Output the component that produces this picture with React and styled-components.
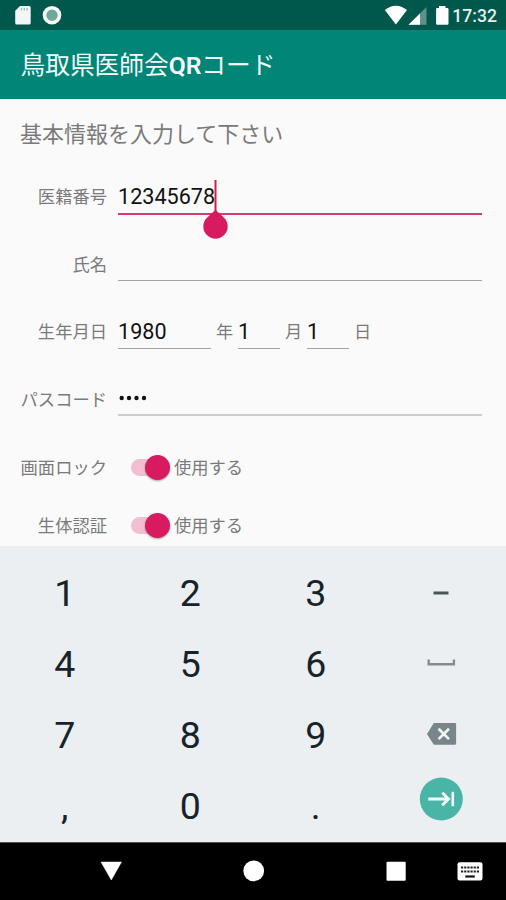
import React from "react";
import styled, { createGlobalStyle } from "styled-components";

const Global = createGlobalStyle`
  * { box-sizing: border-box; }
  html, body { margin: 0; padding: 0; }
  body { font-family: Roboto, "Noto Sans CJK JP", sans-serif; background: #fafafa; }
`;

const Screen = styled.div`
  width: 506px;
  height: 900px;
  display: flex;
  flex-direction: column;
  overflow: hidden;
  background: #fafafa;
`;

const StatusBar = styled.header`
  height: 30px;
  flex: none;
  display: flex;
  justify-content: space-between;
  background: #00574b;
  svg { display: block; }
`;

const StatusRight = styled.div`
  display: flex;
  padding-right: 9px;
`;

const Clock = styled.time`
  width: 45px;
  color: #e6f0ee;
  font-size: 17.6px;
  font-weight: 500;
  line-height: 32px;
  text-align: right;
  white-space: nowrap;
`;

const AppBar = styled.h1`
  height: 69px;
  flex: none;
  margin: 0;
  padding: 1px 20.5px 0;
  border-bottom: 1px solid #007a6c;
  background: #008577;
  color: #f4fbfa;
  font-size: 24.7px;
  font-weight: 400;
  line-height: 70px;
  white-space: nowrap;
`;

const Latin = styled.span`
  font-weight: 600;
`;

const Form = styled.main`
  height: 447px;
  flex: none;
  overflow: hidden;
  padding: 0 24px 0 20px;
  color: #7a7a7a;
`;

const Prompt = styled.h2`
  height: 63px;
  margin: 0;
  padding-top: 8px;
  font-size: 22px;
  font-weight: 400;
  line-height: 56px;
  white-space: nowrap;
`;

const Row = styled.div`
  display: flex;
  align-items: center;
  height: ${(p) => p.$height}px;
  margin-top: ${(p) => p.$gap || 0}px;
`;

const Label = styled.label`
  width: 87px;
  flex: none;
  margin-right: 11px;
  padding-top: ${(p) => (p.$level ? 0 : 2)}px;
  font-size: 17.3px;
  line-height: 24px;
  text-align: right;
  white-space: nowrap;
`;

const Field = styled.div`
  position: relative;
  flex: ${(p) => (p.$width ? "none" : 1)};
  width: ${(p) => (p.$width ? p.$width + "px" : "auto")};
  height: ${(p) => (p.$active ? 37 : 34)}px;
  border-bottom: ${(p) => p.$line || 1}px solid ${(p) => (p.$active ? "#d93a6d" : p.$tone || "#a3a3a3")};
  color: #111;
  font-size: 21.6px;
  line-height: ${(p) => (p.$active ? 37 : 33)}px;
`;

const Unit = styled.span`
  width: ${(p) => p.$width}px;
  padding-left: 5px;
  font-size: 17.2px;
  line-height: 24px;
`;

const Caret = styled.svg`
  position: absolute;
  left: 85px;
  top: 2px;
  display: block;
`;

const Dots = styled.svg`
  display: block;
`;

const Toggle = styled.button`
  display: flex;
  align-items: center;
  width: 56px;
  height: 40px;
  padding: 0 0 0 13px;
  border: 0;
  background: none;
`;

const Track = styled.span`
  display: flex;
  align-items: center;
  justify-content: flex-end;
  width: 39px;
  height: 17px;
  border-radius: 9px;
  background: #f1bfd1;
`;

const Thumb = styled.span`
  width: 25px;
  height: 25px;
  flex: none;
  border-radius: 50%;
  background: #d81b60;
  box-shadow: 0 1px 2px rgba(0, 0, 0, 0.35);
`;

const ToggleText = styled.span`
  padding-top: 2px;
  font-size: 17.3px;
  line-height: 24px;
`;

const Keypad = styled.section`
  height: 296px;
  flex: none;
  display: grid;
  grid-template-columns: repeat(4, 125.5px);
  grid-template-rows: repeat(4, 71.2px);
  padding: 11px 2px 0;
  background: #eceff1;
`;

const Key = styled.button`
  display: flex;
  align-items: center;
  justify-content: center;
  padding: 0;
  border: 0;
  background: none;
  color: #17232b;
  font-family: Roboto, sans-serif;
  font-size: 37.5px;
  line-height: 44px;
  svg { display: block; }
`;

const NavBar = styled.nav`
  height: 58px;
  flex: none;
  background: #000;
  border-top: 1px solid #555;
  svg { display: block; }
`;

const StorageIcons = () => (
  <svg width="70" height="30" viewBox="0 0 70 30">
    <path d="M20 6h9.200a1.500 1.500 0 0 1 1.500 1.500v15.500a1.500 1.500 0 0 1-1.500 1.500h-12.500a1.500 1.500 0 0 1-1.500-1.500v-12.200z" fill="#f2f6f5" />
    <path d="M21.500 8v2.500M24.300 8v2.500M27.100 8v2.500" stroke="#9fbab5" strokeWidth="1.300" />
    <circle cx="52" cy="15.200" r="7.500" fill="#6fa79c" stroke="#f5f8f7" strokeWidth="3.600" />
  </svg>
);

const SignalIcons = () => (
  <svg width="68" height="30" viewBox="380 0 68 30">
    <path d="M380.800 10Q391.800 1.500 403 10L391.900 24.500Z" fill="#fff" />
    <path d="M422.500 7v17.800h-18z" fill="#5e9188" />
    <path d="M416 13.500v11.300h-11.500z" fill="#fff" />
    <path d="M435 6h6.500v2h2q1 0 1 1.200v14.300q0 1.300-1.200 1.300h-10q-1.200 0-1.200-1.300v-14.300q0-1.200 1-1.200h1.900z" fill="#fff" />
  </svg>
);

const icons = {
  dash: (
    <svg width="44" height="44" viewBox="-22 -22 44 44"><path d="M-7.500 0H7.500" stroke="#4b5459" strokeWidth="3" /></svg>
  ),
  space: (
    <svg width="44" height="44" viewBox="-22.300 -22 44 44"><path d="M-12.600-4.500V.3H12.600V-4.500" fill="none" stroke="#858c90" strokeWidth="2.400" /></svg>
  ),
  back: (
    <svg width="44" height="44" viewBox="-22.300 -22 44 44">
      <path d="M-7.500-12H13.500a1.300 1.300 0 0 1 1.300 1.300V8.500a1.300 1.300 0 0 1-1.300 1.300H-7.500L-14.300-1.100Z" fill="#78868c" />
      <path d="M-2.700-6.300L7.700 4.100M7.700-6.300L-2.700 4.100" stroke="#f2f5f6" strokeWidth="2.700" />
    </svg>
  ),
  next: (
    <svg width="44" height="58" viewBox="-22.300 -22 44 58">
      <circle cy="0" r="21.500" fill="#48b5a7" />
      <path d="M-13 0H7M1-6.300L7.300 0L1 6.300" fill="none" stroke="#f6fffd" strokeWidth="2.800" />
      <path d="M11.500-7.200V7.200" stroke="#f6fffd" strokeWidth="2.600" />
    </svg>
  ),
};

const keys = ["1", "2", "3", "dash", "4", "5", "6", "space", "7", "8", "9", "back", ",", "0", ".", "next"];

function SwitchRow({ label, gap }) {
  return (
    <Row $height={58} $gap={gap}>
      <Label>{label}</Label>
      <Toggle aria-label={label}>
        <Track><Thumb /></Track>
      </Toggle>
      <ToggleText>使用する</ToggleText>
    </Row>
  );
}

export default function App() {
  return (
    <Screen lang="ja">
      <Global />
      <StatusBar>
        <StorageIcons />
        <StatusRight>
          <SignalIcons />
          <Clock>17:32</Clock>
        </StatusRight>
      </StatusBar>
      <AppBar>鳥取県医師会<Latin>QR</Latin>コード</AppBar>
      <Form>
        <Prompt>基本情報を入力して下さい</Prompt>
        <Row $height={68}>
          <Label>医籍番号</Label>
          <Field $active $line={2}>
            12345678
            <Caret width="26" height="60" viewBox="0 0 26 60">
              <path d="M12.500 0V32" stroke="#d0213c" strokeWidth="2" />
              <path d="M12.500 29.800L21 37.700A12.200 12.200 0 1 1 4 37.700Z" fill="#d81b60" />
            </Caret>
          </Field>
        </Row>
        <Row $height={68}>
          <Label>氏名</Label>
          <Field />
        </Row>
        <Row $height={67}>
          <Label $level>生年月日</Label>
          <Field $width={93}>1980</Field>
          <Unit $width={27}>年</Unit>
          <Field $width={42}>1</Field>
          <Unit $width={27}>月</Unit>
          <Field $width={42}>1</Field>
          <Unit $width={27}>日</Unit>
        </Row>
        <Row $height={68}>
          <Label>パスコード</Label>
          <Field $line={2} $tone="#cccccc">
            <Dots width="34" height="32" viewBox="0 0 34 32" role="img" aria-label="4">
              <g fill="#111">
                <circle cx="3.700" cy="16" r="2.200" />
                <circle cx="11" cy="16" r="2.200" />
                <circle cx="18.500" cy="16" r="2.200" />
                <circle cx="26" cy="16" r="2.200" />
              </g>
            </Dots>
          </Field>
        </Row>
        <SwitchRow label="画面ロック" gap={5} />
        <SwitchRow label="生体認証" />
      </Form>
      <Keypad>
        {keys.map((k) => (
          <Key key={k} aria-label={k}>{icons[k] || k}</Key>
        ))}
      </Keypad>
      <NavBar>
        <svg width="506" height="57" viewBox="0 843 506 57">
          <g fill="#fff">
            <path d="M101 862h20.500L111.300 880Z" stroke="#fff" strokeWidth="0.500" strokeLinejoin="round" />
            <circle cx="253.700" cy="870.800" r="10.400" />
            <rect x="386.500" y="861.800" width="19.200" height="19" rx="1" />
            <rect x="457.500" y="862.300" width="25" height="18.200" rx="2" />
          </g>
          <path d="M461 867.500h18M461 871.500h18" stroke="#222" strokeWidth="2.200" strokeDasharray="2.200 0.960" />
          <path d="M465.300 876.500h9.500" stroke="#111" strokeWidth="2.200" />
        </svg>
      </NavBar>
    </Screen>
  );
}
